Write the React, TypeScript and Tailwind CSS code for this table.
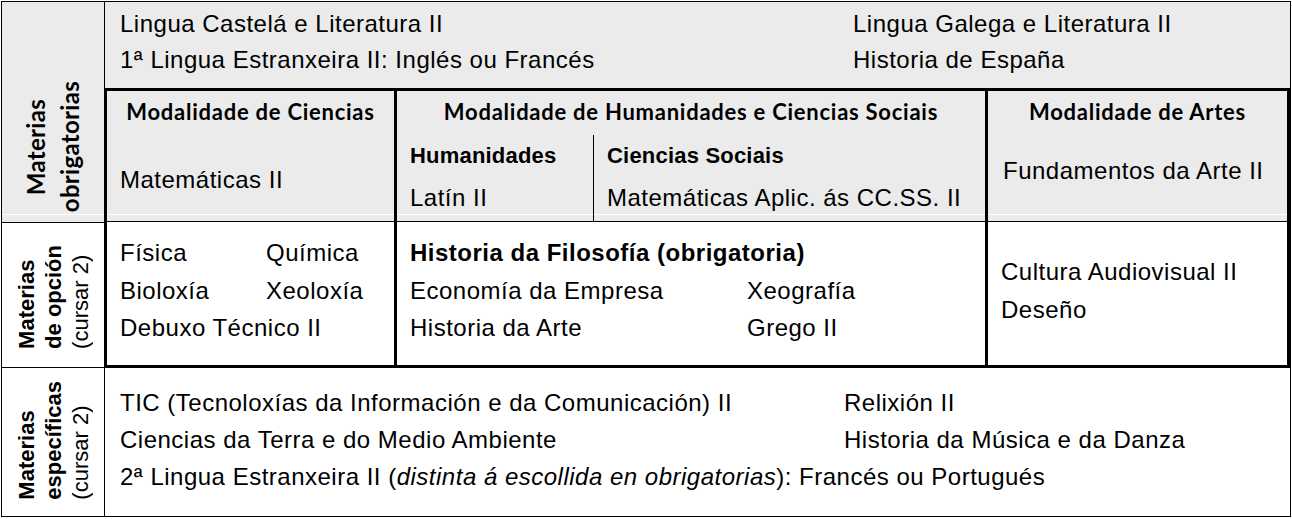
import React from 'react';

const arial = "font-['Liberation_Sans',Arial,sans-serif]";
const calibri = "font-['Lato','Liberation_Sans',sans-serif] font-bold";
const gray = 'bg-[#ebebeb]';

const App: React.FC = () => {
  return (
    <div className={`w-[1292px] h-[519px] bg-white pt-px pl-px text-black ${arial} text-[24px] tracking-[0.5px]`}>
      <div className="grid grid-cols-[103px_1fr] grid-rows-[86px_135px_145px_148px] w-[1290px] h-[516px] border border-black">
        {/* Materias obrigatorias */}
        <div className="col-start-1 row-start-1 row-span-2 flex items-end justify-center pb-[10px] border-r border-b border-black bg-[linear-gradient(#ebebeb_212px,#fff_212px,#fff_213px,#ebebeb_213px)]">
          <div className={`[writing-mode:vertical-rl] rotate-180 text-center text-[24px] leading-[34px] tracking-[0.3px] ${calibri}`}>
            Materias
            <br />
            obrigatorias
          </div>
        </div>

        {/* Row A */}
        <div className={`col-start-2 row-start-1 grid grid-cols-[733px_1fr] pl-[15px] pt-[4px] leading-[36px] ${gray}`}>
          <div>
            <div>Lingua Castelá e Literatura II</div>
            <div>1ª Lingua Estranxeira II: Inglés ou Francés</div>
          </div>
          <div>
            <div>Lingua Galega e Literatura II</div>
            <div>Historia de España</div>
          </div>
        </div>

        {/* Modalidades box */}
        <div className="col-start-2 row-start-2 row-span-2 -ml-px flex flex-col border-[3px] border-black">
          <div className="grid grid-cols-[287px_591px_1fr] h-[131px] shrink-0 border-b border-black bg-[linear-gradient(#ebebeb_123px,#fff_123px,#fff_124px,#ebebeb_124px)]">
            <div className="pt-[2px]">
              <div className={`text-center text-[22px] leading-[38px] tracking-[0.75px] ${calibri}`}>Modalidade de Ciencias</div>
              <div className="mt-[30px] pl-[13px] leading-[38px]">Matemáticas II</div>
            </div>
            <div className="flex flex-col border-l-[3px] border-black pt-[2px]">
              <div className={`text-center text-[22px] leading-[38px] tracking-[0.75px] ${calibri}`}>
                Modalidade de Humanidades e Ciencias Sociais
              </div>
              <div className="mt-[4px] grid flex-1 grid-cols-[196px_1fr] leading-[42px]">
                <div className="pl-[13px]">
                  <div className="text-[22px] font-bold tracking-[0.2px]">Humanidades</div>
                  <div>Latín II</div>
                </div>
                <div className="border-l border-black pl-[13px]">
                  <div className="text-[22px] font-bold tracking-[0.2px]">Ciencias Sociais</div>
                  <div>Matemáticas Aplic. ás CC.SS. II</div>
                </div>
              </div>
            </div>
            <div className="border-l-[3px] border-black pt-[2px]">
              <div className={`text-center text-[22px] leading-[38px] tracking-[0.75px] ${calibri}`}>Modalidade de Artes</div>
              <div className="mt-[21px] pl-[15px] leading-[38px]">Fundamentos da Arte II</div>
            </div>
          </div>

          <div className="grid flex-1 grid-cols-[287px_591px_1fr] leading-[37.5px]">
            <div className="grid grid-cols-[146px_1fr] content-start pl-[13px] pt-[12px]">
              <div>Física</div>
              <div>Química</div>
              <div>Bioloxía</div>
              <div>Xeoloxía</div>
              <div className="col-span-2">Debuxo Técnico II</div>
            </div>
            <div className="grid grid-cols-[337px_1fr] content-start border-l-[3px] border-black pl-[13px] pt-[12px]">
              <div className="col-span-2 font-bold">Historia da Filosofía (obrigatoria)</div>
              <div>Economía da Empresa</div>
              <div>Xeografía</div>
              <div>Historia da Arte</div>
              <div>Grego II</div>
            </div>
            <div className="border-l-[3px] border-black pl-[13px] pt-[31px]">
              <div>Cultura Audiovisual II</div>
              <div>Deseño</div>
            </div>
          </div>
        </div>

        {/* Materias de opción */}
        <div className="col-start-1 row-start-3 flex items-end justify-center pb-[18px] border-r border-b border-black">
          <div className="[writing-mode:vertical-rl] rotate-180 text-left text-[22px] leading-[27px] tracking-normal">
            <span className="font-bold">Materias</span>
            <br />
            <span className="font-bold">de opción</span>
            <br />
            (cursar 2)
          </div>
        </div>

        {/* Materias específicas */}
        <div className="col-start-1 row-start-4 flex items-end justify-center pb-[16px] border-r border-black">
          <div className="[writing-mode:vertical-rl] rotate-180 text-left text-[22px] leading-[27px] tracking-normal">
            <span className="font-bold">Materias</span>
            <br />
            <span className="font-bold">específicas</span>
            <br />
            (cursar 2)
          </div>
        </div>

        {/* Row D */}
        <div className="col-start-2 row-start-4 grid grid-cols-[724px_1fr] content-start pl-[15px] pt-[16px] leading-[37px]">
          <div>TIC (Tecnoloxías da Información e da Comunicación) II</div>
          <div>Relixión II</div>
          <div>Ciencias da Terra e do Medio Ambiente</div>
          <div>Historia da Música e da Danza</div>
          <div className="col-span-2">
            2ª Lingua Estranxeira II (<i>distinta á escollida en obrigatorias</i>): Francés ou Portugués
          </div>
        </div>
      </div>
    </div>
  );
};

export default App;
